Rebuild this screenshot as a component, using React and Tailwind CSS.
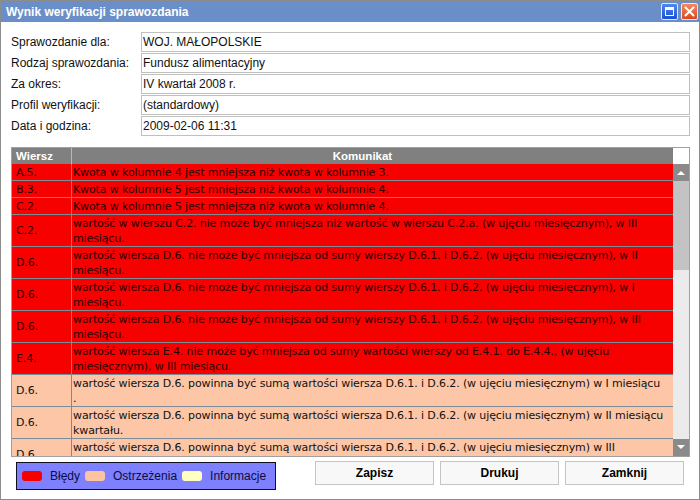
import React from "react";

const fields = [
  ["Sprawozdanie dla:", "WOJ. MAŁOPOLSKIE"],
  ["Rodzaj sprawozdania:", "Fundusz alimentacyjny"],
  ["Za okres:", "IV kwartał 2008 r."],
  ["Profil weryfikacji:", "(standardowy)"],
  ["Data i godzina:", "2009-02-06 11:31"],
];

const rows = [
  { code: "A.5.", type: "err", lines: ["Kwota w kolumnie 4 jest mniejsza niż kwota w kolumnie 3."] },
  { code: "B.3.", type: "err", lines: ["Kwota w kolumnie 5 jest mniejsza niż kwota w kolumnie 4."] },
  { code: "C.2.", type: "err", lines: ["Kwota w kolumnie 5 jest mniejsza niż kwota w kolumnie 4."] },
  {
    code: "C.2.",
    type: "err",
    lines: [
      "wartość w wierszu C.2. nie może być mniejsza niż wartość w wierszu C.2.a. (w ujęciu miesięcznym), w III",
      "miesiącu.",
    ],
  },
  {
    code: "D.6.",
    type: "err",
    lines: ["wartość wiersza D.6. nie może być mniejsza od sumy wierszy D.6.1. i D.6.2. (w ujęciu miesięcznym), w II", "miesiącu."],
  },
  {
    code: "D.6.",
    type: "err",
    lines: ["wartość wiersza D.6. nie może być mniejsza od sumy wierszy D.6.1. i D.6.2. (w ujęciu miesięcznym), w I", "miesiącu."],
  },
  {
    code: "D.6.",
    type: "err",
    lines: ["wartość wiersza D.6. nie może być mniejsza od sumy wierszy D.6.1. i D.6.2. (w ujęciu miesięcznym), w III", "miesiącu."],
  },
  {
    code: "E.4.",
    type: "err",
    lines: ["wartość wiersza E.4. nie może być mniejsza od sumy wartości wierszy od E.4.1. do E.4.4., (w ujęciu", "miesięcznym), w III miesiącu."],
  },
  {
    code: "D.6.",
    type: "warn",
    lines: ["wartość wiersza D.6. powinna być sumą wartości wiersza D.6.1. i D.6.2. (w ujęciu miesięcznym) w I miesiącu", "."],
  },
  {
    code: "D.6.",
    type: "warn",
    lines: ["wartość wiersza D.6. powinna być sumą wartości wiersza D.6.1. i D.6.2. (w ujęciu miesięcznym) w II miesiącu", "kwartału."],
  },
  {
    code: "D.6.",
    type: "warn",
    lines: ["wartość wiersza D.6. powinna być sumą wartości wiersza D.6.1. i D.6.2. (w ujęciu miesięcznym) w III", "miesiącu."],
  },
];

function TitleButtons() {
  return (
    <div className="flex items-center gap-[3px] mr-[1px]">
      <div className="w-[17px] h-[17px] rounded-[2px] border border-[#dfe8ff] bg-gradient-to-b from-[#4f86f5] to-[#1c4fd6] flex items-center justify-center">
        <div className="w-[9px] h-[9px] border border-white border-t-[3px]" />
      </div>
      <div className="w-[17px] h-[17px] rounded-[2px] border border-[#ffe2d6] bg-gradient-to-b from-[#f08a60] to-[#d6471d] flex items-center justify-center">
        <svg width="11" height="11" viewBox="0 0 11 11">
          <path d="M1.5 1.5 L9.5 9.5 M9.5 1.5 L1.5 9.5" stroke="white" strokeWidth="2" strokeLinecap="round" />
        </svg>
      </div>
    </div>
  );
}

function Scrollbar() {
  return (
    <div className="w-[16px] flex flex-col bg-[#ebebeb]">
      <div className="h-[16px] bg-white" />
      <div className="h-[17px] bg-[#8a8a8a] flex items-center justify-center">
        <svg width="8" height="5" viewBox="0 0 8 5">
          <path d="M0 5 L4 1 L8 5 Z" fill="white" />
        </svg>
      </div>
      <div className="h-[89px] bg-[#c3c3c3]" />
      <div className="flex-1" />
      <div className="h-[17px] bg-[#8a8a8a] flex items-center justify-center">
        <svg width="8" height="5" viewBox="0 0 8 5">
          <path d="M0 0 L8 0 L4 4 Z" fill="white" />
        </svg>
      </div>
    </div>
  );
}

export default function App() {
  return (
    <div className="w-[700px] h-[500px] border border-[#8c8c8c] bg-white flex flex-col font-['Liberation_Sans',Arial,sans-serif] text-[#111]">
      {/* title bar */}
      <div className="h-[21px] bg-[#6a8fc8] flex items-center justify-between pl-[5px]">
        <span className="text-white font-bold text-[12px]">Wynik weryfikacji sprawozdania</span>
        <TitleButtons />
      </div>

      <div className="flex-1 flex flex-col pl-[10px] pr-[9px]">
        {/* fields */}
        <div className="mt-[10px] flex flex-col gap-[1px]">
          {fields.map(([label, value]) => (
            <div key={label} className="flex items-center h-[20px]">
              <div className="w-[130px] text-[12px]">{label}</div>
              <div className="flex-1 h-[20px] border border-[#c0c0c0] pl-[1px] text-[12px] leading-[18px]">{value}</div>
            </div>
          ))}
        </div>

        {/* table */}
        <div className="mt-[11px] h-[310px] border border-[#a0a0a0] flex">
          <div className="flex-1 flex flex-col overflow-hidden">
            <div className="h-[16px] bg-[#808080] flex text-white font-bold text-[11.5px] leading-[16px]">
              <div className="w-[60px] border-r border-[#b8b8b8] pl-[4px]">Wiersz</div>
              <div className="flex-1 text-center pr-[20px]">Komunikat</div>
            </div>
            <div className="flex-1 overflow-hidden font-['DejaVu_Sans',Verdana,sans-serif]">
              {rows.map((r, i) => (
                <div
                  key={i}
                  className={`flex border-b border-[#7b8b98] text-[11px] leading-[15px] tracking-[-0.12px] ${
                    r.lines.length > 1 ? "h-[32px]" : "h-[17px]"
                  } ${r.type === "err" ? "bg-[#f70000] text-[#2a0000]" : "bg-[#fdc6a6] text-[#111]"}`}
                >
                  <div className="w-[60px] shrink-0 border-r border-[#7b8b98] pl-[4px] flex items-center">{r.code}</div>
                  <div className="flex-1 pl-[1px] pt-[1px] whitespace-nowrap overflow-hidden">
                    {r.lines.map((l, j) => (
                      <div key={j}>{l}</div>
                    ))}
                  </div>
                </div>
              ))}
            </div>
          </div>
          <Scrollbar />
        </div>

        {/* bottom */}
        <div className="flex items-start justify-between">
          <div className="mt-[5px] ml-[5px] w-[260px] h-[28px] border border-[#101020] bg-[#7f80fd] flex items-center text-[12px] text-[#0c0c40] pl-[5px]">
            <div className="w-[20px] h-[10px] rounded-[3px] bg-[#f70000]" />
            <span className="ml-[8px]">Błędy</span>
            <div className="ml-[5px] w-[20px] h-[10px] rounded-[3px] bg-[#fdc3a2]" />
            <span className="ml-[8px]">Ostrzeżenia</span>
            <div className="ml-[5px] w-[20px] h-[10px] rounded-[3px] bg-[#ffffc2]" />
            <span className="ml-[8px]">Informacje</span>
          </div>
          <div className="mt-[4px] mr-[6px] flex gap-[6px]">
            {["Zapisz", "Drukuj", "Zamknij"].map((b) => (
              <button
                key={b}
                className="w-[119px] h-[24px] border border-[#c4c4c4] bg-[#f8f8f8] text-[12px] font-bold text-black"
              >
                {b}
              </button>
            ))}
          </div>
        </div>
      </div>
    </div>
  );
}
